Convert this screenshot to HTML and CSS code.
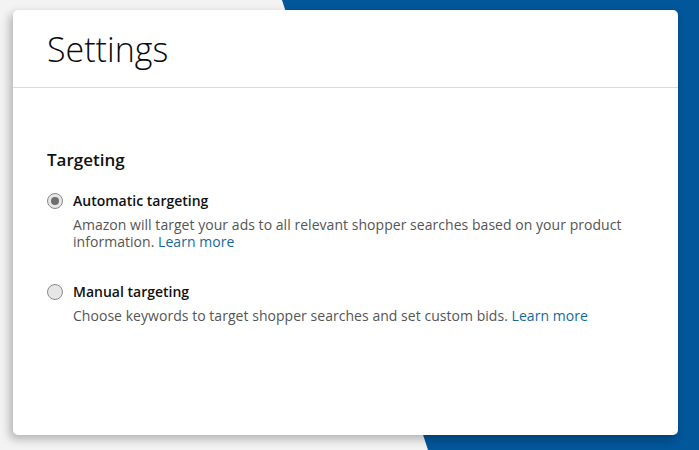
FILE: index.html
```html
<!DOCTYPE html>
<html lang="en">
<head>
<meta charset="utf-8">
<title>Settings</title>
<link rel="stylesheet" href="styles.css">
</head>
<body>
<div class="stage">
  <div class="card">
    <header class="card-header">
      <h1 class="title">Settings</h1>
    </header>
    <section class="card-body">
      <h2 class="section-title">Targeting</h2>
      <div class="option">
        <span class="radio radio-checked"></span>
        <div class="option-text">
          <div class="option-label">Automatic targeting</div>
          <p class="option-desc">Amazon will target your ads to all relevant shopper searches based on your product information. <a class="link" href="#">Learn more</a></p>
        </div>
      </div>
      <div class="option">
        <span class="radio"></span>
        <div class="option-text">
          <div class="option-label">Manual targeting</div>
          <p class="option-desc">Choose keywords to target shopper searches and set custom bids. <a class="link" href="#">Learn more</a></p>
        </div>
      </div>
    </section>
  </div>
</div>
</body>
</html>
```
FILE: styles.css
```css
html, body {
  margin: 0;
  padding: 0;
}
body {
  width: 699px;
  height: 450px;
  overflow: hidden;
  background: #f3f3f3;
  font-family: "Open Sans", "Noto Sans", sans-serif;
  position: relative;
}
body::before {
  content: "";
  position: absolute;
  inset: 0;
  background: #02569a;
  clip-path: polygon(282px 0, 699px 0, 699px 450px, 428px 450px);
}
.stage {
  position: relative;
  padding: 10px 21px 15px 13px;
}
.card {
  width: 665px;
  height: 425px;
  background: #fff;
  border-radius: 5px;
  box-shadow: -3px 4px 10px rgba(0, 0, 0, 0.28);
  display: flex;
  flex-direction: column;
}
.card-header {
  height: 77px;
  border-bottom: 1px solid #d9d9d9;
  display: flex;
  align-items: center;
  padding-left: 34px;
}
.title {
  margin: 0;
  font-size: 34px;
  font-weight: 300;
  color: #0a0a0a;
  letter-spacing: 0;
}
.card-body {
  padding: 60px 34px 0 34px;
}
.section-title {
  margin: 0 0 20px;
  font-size: 17px;
  font-weight: 600;
  color: #111;
}
.option {
  display: flex;
  gap: 10px;
  margin-bottom: 32px;
}
.radio {
  flex: none;
  width: 14px;
  height: 14px;
  border: 1px solid #8a8a8a;
  border-radius: 50%;
  background: #e6e6e6;
  margin-top: 2px;
  position: relative;
}
.radio-checked::after {
  content: "";
  position: absolute;
  left: 3px;
  top: 3px;
  width: 8px;
  height: 8px;
  border-radius: 50%;
  background: #6e6e6e;
}
.option-label {
  font-size: 14px;
  font-weight: 600;
  color: #111;
  line-height: 20px;
}
.option-desc {
  margin: 5px 0 0;
  font-size: 14px;
  line-height: 17px;
  letter-spacing: 0.04px;
  color: #555;
}
.link {
  color: #16689c;
  text-decoration: none;
}
```
